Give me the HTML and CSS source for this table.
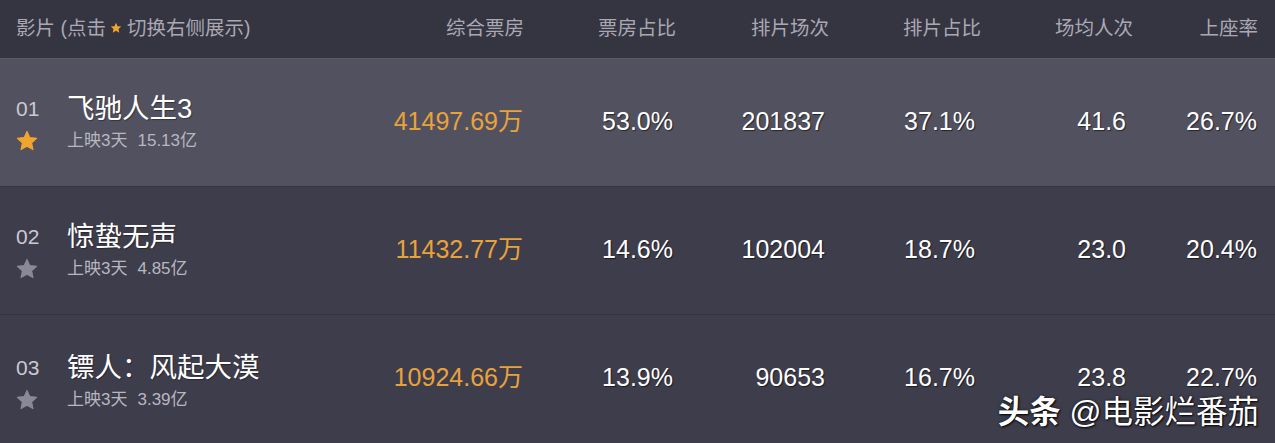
FILE: index.html
```html
<!DOCTYPE html>
<html lang="zh-CN">
<head>
<meta charset="utf-8">
<title>票房</title>
<link rel="stylesheet" href="styles.css">
</head>
<body>
<div class="board">
  <div class="grid head">
    <div class="hcell film-h">影片 (点击 <svg class="hstar" viewBox="0 0 24 24"><polygon points="12,1.5 15.1,8.3 22.5,9.1 17,14.1 18.5,21.4 12,17.7 5.5,21.4 7,14.1 1.5,9.1 8.9,8.3"/></svg> 切换右侧展示)</div>
    <div class="hcell">综合票房</div>
    <div class="hcell">票房占比</div>
    <div class="hcell">排片场次</div>
    <div class="hcell">排片占比</div>
    <div class="hcell">场均人次</div>
    <div class="hcell">上座率</div>
  </div>

  <div class="grid row active">
    <div class="film">
      <span class="rank">01</span>
      <span class="name">飞驰人生3</span>
      <svg class="star on" viewBox="0 0 24 24"><polygon points="12,1.5 15.1,8.3 22.5,9.1 17,14.1 18.5,21.4 12,17.7 5.5,21.4 7,14.1 1.5,9.1 8.9,8.3"/></svg>
      <span class="sub">上映3天<span class="gross">15.13亿</span></span>
    </div>
    <div class="cell c2 box">41497.69万</div>
    <div class="cell c3">53.0%</div>
    <div class="cell c4">201837</div>
    <div class="cell c5">37.1%</div>
    <div class="cell c6">41.6</div>
    <div class="cell c7">26.7%</div>
  </div>

  <div class="grid row">
    <div class="film">
      <span class="rank">02</span>
      <span class="name">惊蛰无声</span>
      <svg class="star" viewBox="0 0 24 24"><polygon points="12,1.5 15.1,8.3 22.5,9.1 17,14.1 18.5,21.4 12,17.7 5.5,21.4 7,14.1 1.5,9.1 8.9,8.3"/></svg>
      <span class="sub">上映3天<span class="gross">4.85亿</span></span>
    </div>
    <div class="cell c2 box">11432.77万</div>
    <div class="cell c3">14.6%</div>
    <div class="cell c4">102004</div>
    <div class="cell c5">18.7%</div>
    <div class="cell c6">23.0</div>
    <div class="cell c7">20.4%</div>
  </div>

  <div class="grid row last">
    <div class="film">
      <span class="rank">03</span>
      <span class="name">镖人：风起大漠</span>
      <svg class="star" viewBox="0 0 24 24"><polygon points="12,1.5 15.1,8.3 22.5,9.1 17,14.1 18.5,21.4 12,17.7 5.5,21.4 7,14.1 1.5,9.1 8.9,8.3"/></svg>
      <span class="sub">上映3天<span class="gross">3.39亿</span></span>
    </div>
    <div class="cell c2 box">10924.66万</div>
    <div class="cell c3">13.9%</div>
    <div class="cell c4">90653</div>
    <div class="cell c5">16.7%</div>
    <div class="cell c6">23.8</div>
    <div class="cell c7">22.7%</div>
  </div>

  <div class="watermark"><b>头条</b> @电影烂番茄</div>
</div>
</body>
</html>
```

FILE: styles.css
```css
html, body {
  margin: 0;
  padding: 0;
  background: #3e3d4c;
}
body {
  font-family: "Liberation Sans", "Noto Sans CJK SC", sans-serif;
  width: 1275px;
  height: 443px;
  overflow: hidden;
}
.board {
  position: relative;
  width: 1275px;
  height: 443px;
  background: #3e3d4c;
}
.grid {
  display: grid;
  grid-template-columns: 380px 144px 152px 153px 152px 152px 125px;
  padding-right: 17px;
  align-items: center;
}
.head {
  height: 58px;
  background: #353441;
  color: #a9a8b3;
  font-size: 19.5px;
}
.hcell {
  text-align: right;
  white-space: nowrap;
  line-height: 24px;
  margin-top: -3px;
}
.hcell.film-h {
  text-align: left;
  padding-left: 16px;
  display: flex;
  align-items: center;
}
.hstar {
  width: 12px;
  height: 12px;
  fill: #f0a52c;
  margin: 0 5px 0 4px;
}
.row {
  height: 128px;
  background: #3e3d4c;
  box-sizing: border-box;
  border-top: 1px solid #34333f;
}
.row.active {
  background: #52515f;
  border-top: 1px solid #5a5967;
}
.row.last .film {
  margin-top: 5px;
}
.film {
  display: grid;
  grid-template-columns: 51px auto;
  grid-template-rows: 32px 22px;
  row-gap: 5px;
  padding-left: 16px;
  align-items: center;
}
.rank {
  color: #c9c9d0;
  font-size: 21px;
  line-height: 24px;
}
.name {
  color: #ffffff;
  font-size: 27.5px;
  line-height: 32px;
  white-space: nowrap;
  text-shadow: 1px 1px 1px rgba(0, 0, 0, 0.35);
}
.star {
  width: 24px;
  height: 22px;
  fill: #8a8996;
  stroke: #8a8996;
  stroke-width: 1.2;
  stroke-linejoin: round;
  margin-left: -1px;
}
.star.on {
  fill: #f2a52e;
  stroke: #f2a52e;
}
.sub {
  color: #b8b7c0;
  font-size: 17px;
  line-height: 22px;
  white-space: nowrap;
}
.gross {
  margin-left: 10px;
}
.cell {
  text-align: right;
  color: #ffffff;
  font-size: 25px;
  line-height: 30px;
  white-space: nowrap;
  text-shadow: 1px 1px 1px rgba(0, 0, 0, 0.55);
  margin-top: -3px;
}
.cell.box {
  color: #e9a23b;
  text-shadow: none;
}
.c2 { padding-right: 1px; }
.c3 { padding-right: 3px; }
.c4 { padding-right: 4px; }
.c5 { padding-right: 6px; }
.c6 { padding-right: 7px; }
.c7 { padding-right: 1px; }
.watermark {
  position: absolute;
  right: 16px;
  bottom: 14px;
  color: #ffffff;
  font-size: 31.5px;
  line-height: 34px;
  white-space: nowrap;
  text-shadow: 1px 1px 2px rgba(0, 0, 0, 0.9), 0 0 3px rgba(0, 0, 0, 0.6);
}
.watermark b {
  font-weight: 700;
}
```
